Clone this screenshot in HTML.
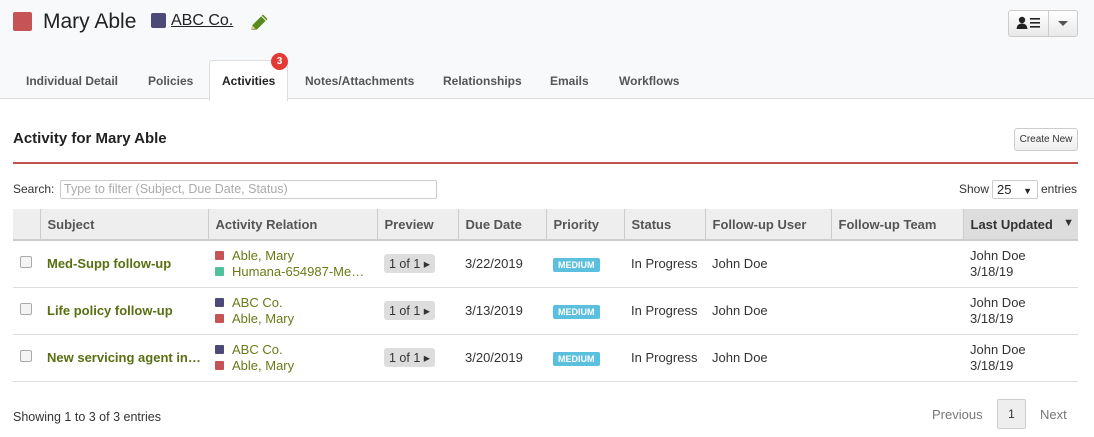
<!DOCTYPE html>
<html><head><meta charset="utf-8"><style>
*{box-sizing:border-box;margin:0;padding:0}
body{width:1094px;height:437px;background:#fff;font-family:"Liberation Sans",sans-serif;font-size:13px;color:#333;position:relative;overflow:hidden}
.hdr{position:absolute;left:0;top:0;width:1094px;height:99px;background:#f8f9fa;border-bottom:1px solid #ddd}
.abs{position:absolute}
.sq{position:absolute;border-radius:2px}
.tab{position:absolute;top:74px;font-size:12px;font-weight:bold;color:#555}
table{position:absolute;left:13px;top:209px;width:1065px;border-collapse:collapse}
th{height:31px;background:#eee;text-align:left;padding-left:7px;font-size:13px;color:#555;border-right:1px solid #ccc;border-bottom:2px solid #ccc}
th.lu{background:#ddd;color:#333;border-right:none}
td{height:47px;border-bottom:1px solid #ddd;padding-left:7px;font-size:13px;color:#333;vertical-align:middle}
.subj{color:#5a6e12;font-weight:bold}
.rel{color:#6b7a17;line-height:16px}
.rel i{display:inline-block;width:9px;height:9px;border-radius:1px;margin-right:8px}
.pv{display:inline-block;background:#ddd;border-radius:3px;padding:2px 5px;font-size:12.5px}
.med{display:inline-block;background:#5bc0de;color:#fff;font-size:9px;font-weight:bold;padding:2px 5px;border-radius:2px}
.cb{display:inline-block;width:12px;height:12px;border:1px solid #aaa;border-radius:2px;background:#f4f4f4}
</style></head><body>
<div class="hdr"></div>
<div class="sq" style="left:13px;top:12px;width:19px;height:19px;background:#c65456"></div>
<div class="abs" style="left:43px;top:10px;font-size:21px;color:#222">Mary Able</div>
<div class="sq" style="left:151px;top:13px;width:15px;height:15px;background:#4d4a78"></div>
<div class="abs" style="left:171px;top:12px;font-size:16px;color:#222;text-decoration:underline">ABC Co.</div>
<svg class="abs" style="left:249px;top:12px" width="22" height="20" viewBox="0 0 22 20"><path d="M2 18 L3.5 13 L14 2.5 L18.5 7 L8 17.5 Z" fill="#5a8a1e"/><path d="M2 18 L3.5 13.5 L6.5 16.5Z" fill="#d9c38c"/><path d="M12.5 4 L17 8.5" stroke="#f8f9fa" stroke-width="1"/></svg>
<div class="abs" style="left:1008px;top:10px;width:70px;height:27px;border:1px solid #ccc;border-radius:3px;background:linear-gradient(#fff,#e9e9e9)"></div>
<div class="abs" style="left:1048px;top:11px;width:1px;height:25px;background:#ccc"></div>
<svg class="abs" style="left:1016px;top:16px" width="26" height="14" viewBox="0 0 26 14"><circle cx="6" cy="4" r="3.2" fill="#222"/><path d="M0.5 13 Q1 7.5 6 7.5 Q11 7.5 11.5 13Z" fill="#222"/><rect x="14" y="2" width="10" height="1.6" fill="#222"/><rect x="14" y="6" width="10" height="1.6" fill="#222"/><rect x="14" y="10" width="10" height="1.6" fill="#222"/></svg>
<div class="abs" style="left:1058px;top:21px;width:0;height:0;border-left:5px solid transparent;border-right:5px solid transparent;border-top:5px solid #555"></div>
<div class="abs" style="left:209px;top:60px;width:79px;height:41px;background:#fff;border:1px solid #ddd;border-bottom:none;border-radius:3px 3px 0 0"></div>
<div class="tab" style="left:26px">Individual Detail</div>
<div class="tab" style="left:148px">Policies</div>
<div class="tab" style="left:222px;color:#222">Activities</div>
<div class="tab" style="left:305px">Notes/Attachments</div>
<div class="tab" style="left:443px">Relationships</div>
<div class="tab" style="left:550px">Emails</div>
<div class="tab" style="left:619px">Workflows</div>
<div class="abs" style="left:271px;top:53px;width:17px;height:17px;border-radius:50%;background:#e53935;color:#fff;font-size:10px;font-weight:bold;text-align:center;line-height:17px">3</div>
<div class="abs" style="left:13px;top:130px;font-size:15px;font-weight:bold;color:#222">Activity for Mary Able</div>
<div class="abs" style="left:1014px;top:128px;width:64px;height:23px;border:1px solid #ccc;border-radius:3px;background:linear-gradient(#fff,#eee);font-size:10px;text-align:center;line-height:21px;color:#333">Create New</div>
<div class="abs" style="left:13px;top:162px;width:1065px;height:2px;background:#c0504d"></div>
<div class="abs" style="left:13px;top:182px;font-size:12px">Search:</div>
<div class="abs" style="left:60px;top:180px;width:377px;height:19px;border:1px solid #ccc;border-radius:2px;font-size:12.5px;color:#aaa;padding-left:3px;line-height:17px">Type to filter (Subject, Due Date, Status)</div>
<div class="abs" style="left:959px;top:182px;font-size:12px">Show</div>
<div class="abs" style="left:992px;top:180px;width:46px;height:19px;border:1px solid #ccc;border-radius:2px;font-size:13px;padding-left:4px;line-height:17px;color:#222">25 <span style="font-size:9px;margin-left:8px">&#9660;</span></div>
<div class="abs" style="left:1041px;top:182px;font-size:12px">entries</div>
<table>
<tr><th style="width:27px;padding:0"></th><th style="width:168px">Subject</th><th style="width:169px">Activity Relation</th><th style="width:81px">Preview</th><th style="width:88px">Due Date</th><th style="width:78px">Priority</th><th style="width:81px">Status</th><th style="width:126px">Follow-up User</th><th style="width:132px">Follow-up Team</th><th class="lu">Last Updated <span style="float:right;margin-right:4px;font-size:11px">&#9660;</span></th></tr>
<tr><td style="padding-left:7px"><span class="cb"></span></td><td class="subj">Med-Supp follow-up</td><td class="rel"><i style="background:#c65456"></i>Able, Mary<br><i style="background:#4fc29a"></i>Humana-654987-Me…</td><td><span class="pv">1 of 1 ▸</span></td><td>3/22/2019</td><td><span class="med">MEDIUM</span></td><td>In Progress</td><td>John Doe</td><td></td><td style="line-height:16px">John Doe<br>3/18/19</td></tr>
<tr><td style="padding-left:7px"><span class="cb"></span></td><td class="subj">Life policy follow-up</td><td class="rel"><i style="background:#4d4a78"></i>ABC Co.<br><i style="background:#c65456"></i>Able, Mary</td><td><span class="pv">1 of 1 ▸</span></td><td>3/13/2019</td><td><span class="med">MEDIUM</span></td><td>In Progress</td><td>John Doe</td><td></td><td style="line-height:16px">John Doe<br>3/18/19</td></tr>
<tr><td style="padding-left:7px"><span class="cb"></span></td><td class="subj">New servicing agent in…</td><td class="rel"><i style="background:#4d4a78"></i>ABC Co.<br><i style="background:#c65456"></i>Able, Mary</td><td><span class="pv">1 of 1 ▸</span></td><td>3/20/2019</td><td><span class="med">MEDIUM</span></td><td>In Progress</td><td>John Doe</td><td></td><td style="line-height:16px">John Doe<br>3/18/19</td></tr>
</table>
<div class="abs" style="left:13px;top:410px;font-size:12.5px">Showing 1 to 3 of 3 entries</div>
<div class="abs" style="left:932px;top:407px;font-size:13px;color:#777">Previous</div>
<div class="abs" style="left:997px;top:399px;width:29px;height:30px;border:1px solid #ccc;background:#eee;text-align:center;line-height:28px;font-size:12px;border-radius:2px">1</div>
<div class="abs" style="left:1040px;top:407px;font-size:13px;color:#777">Next</div>
</body></html>
